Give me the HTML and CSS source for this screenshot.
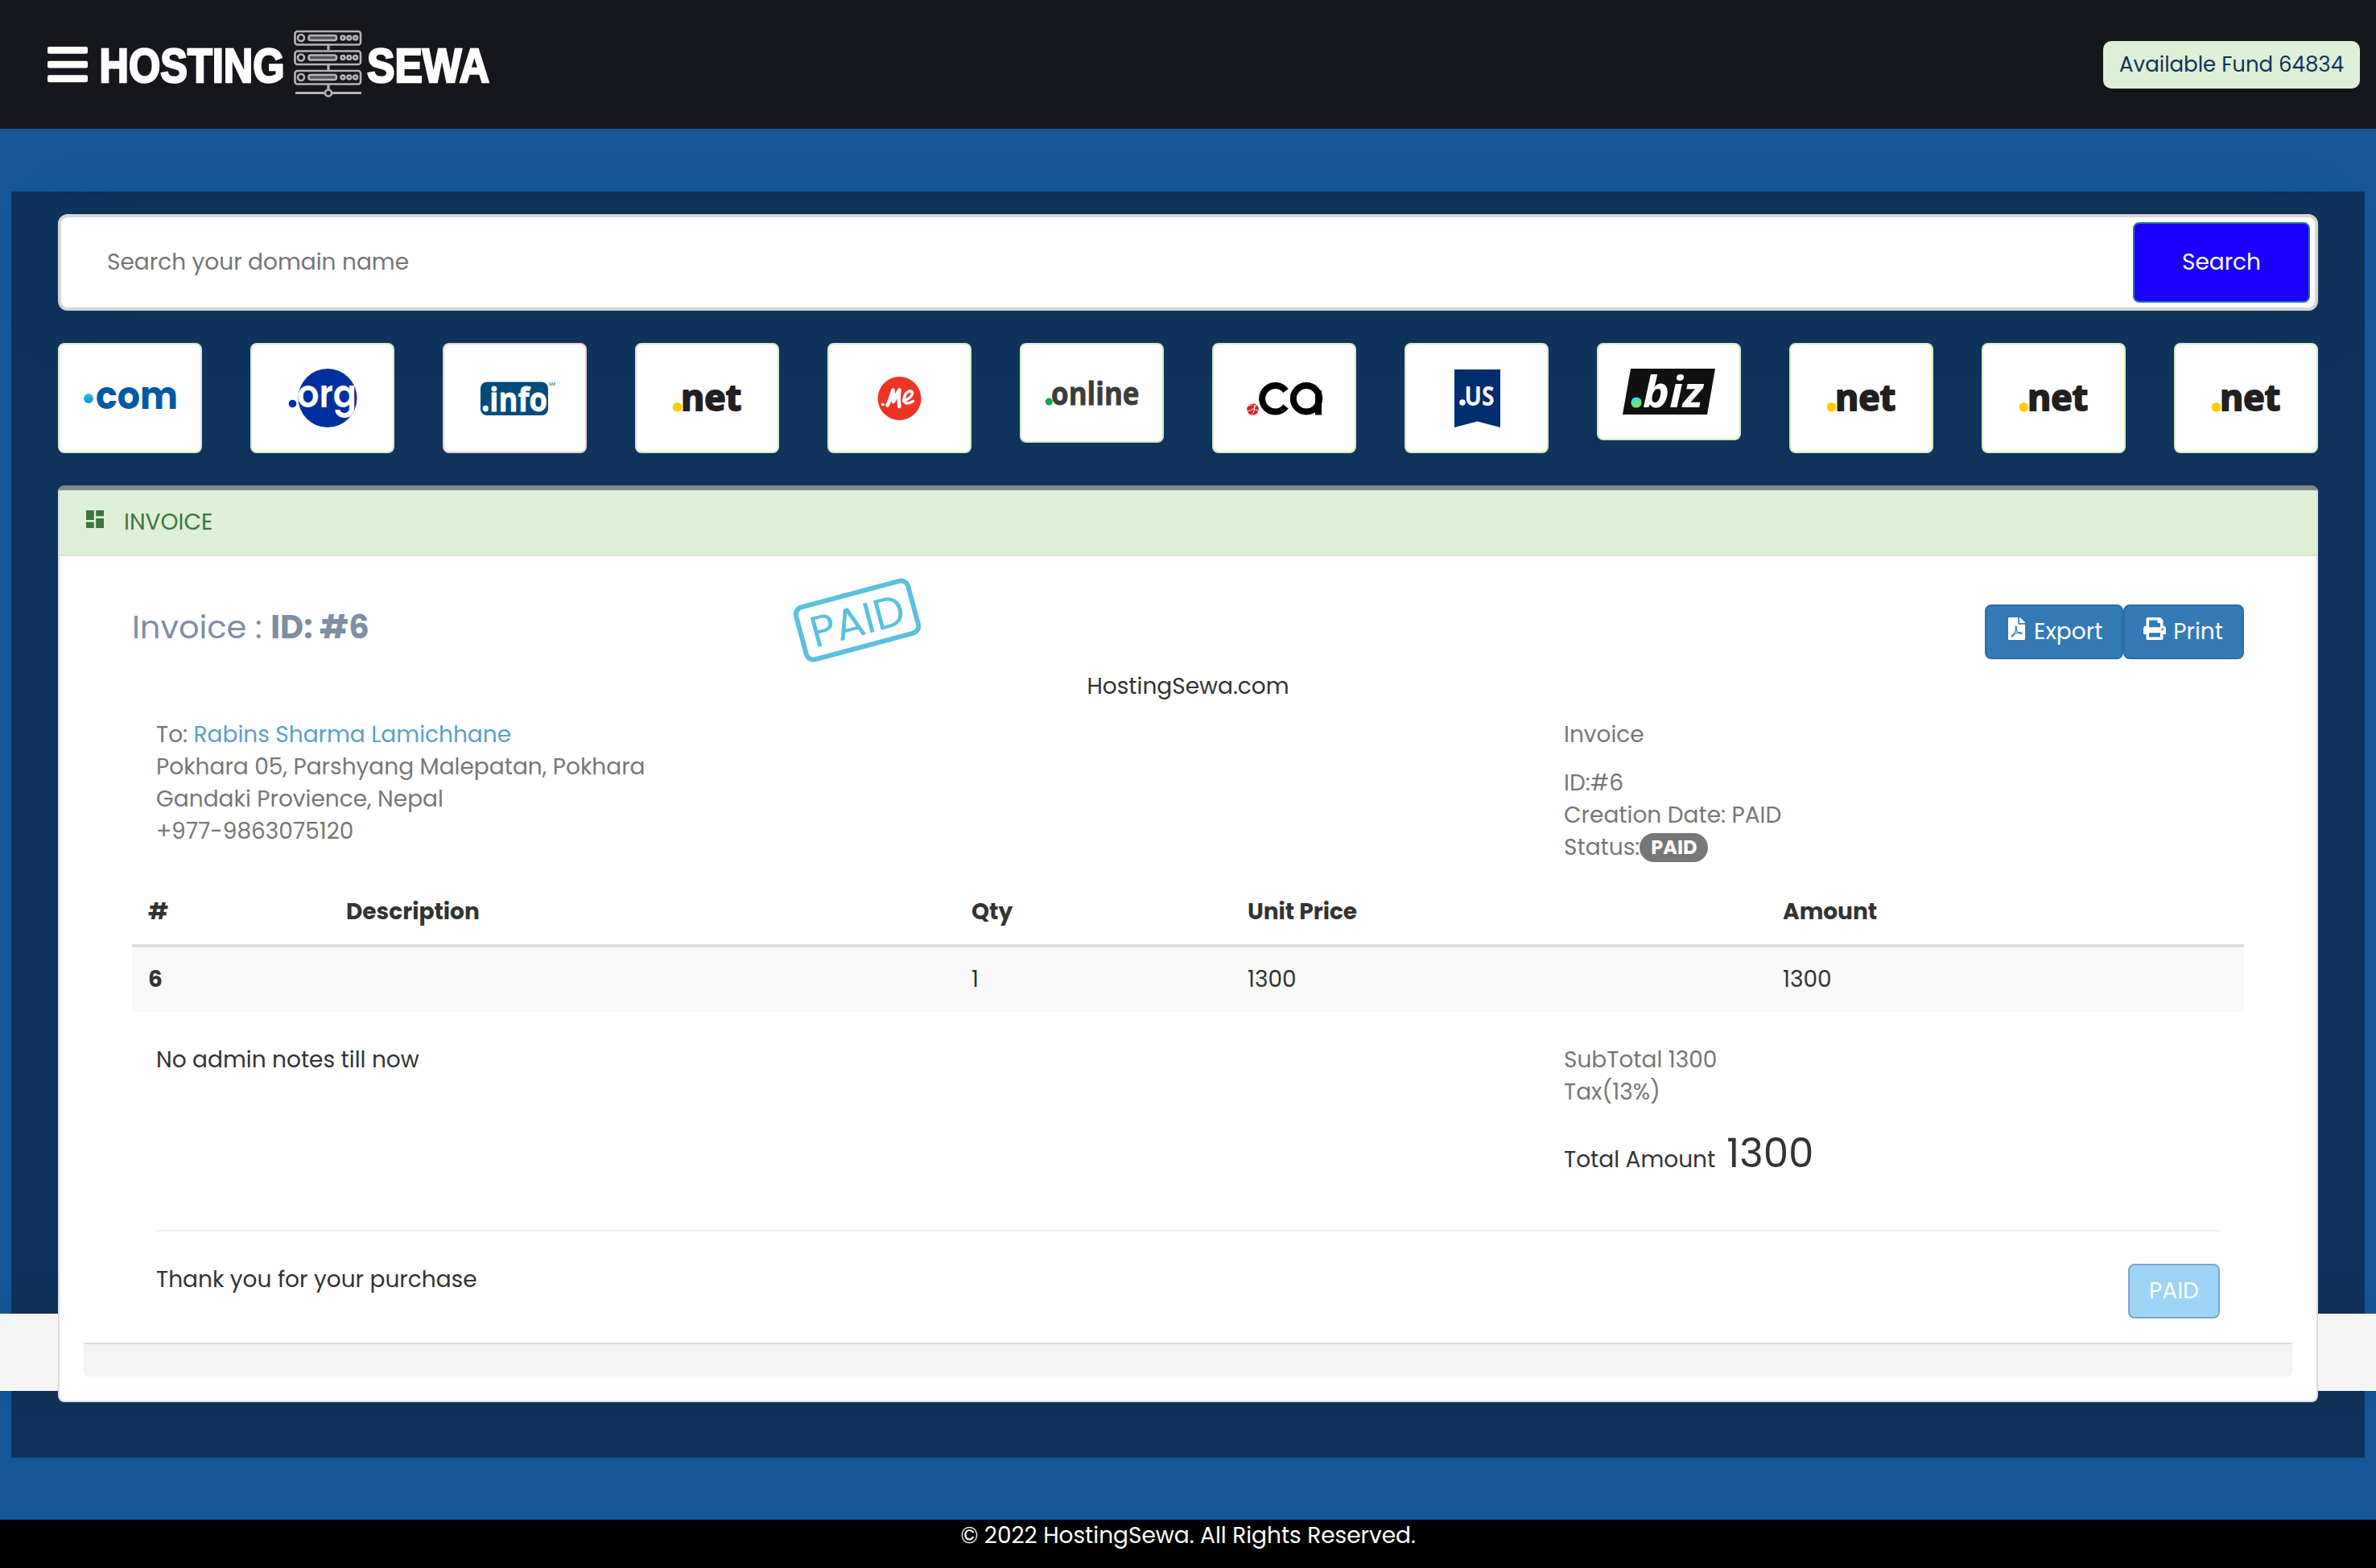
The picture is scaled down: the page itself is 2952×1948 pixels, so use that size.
FILE: index.html
```html
<!DOCTYPE html>
<html lang="en">
<head>
<meta charset="utf-8">
<title>HostingSewa - Invoice</title>
<link rel="stylesheet" href="styles.css">
</head>
<body>
<header class="topbar">
  <div class="brand">
    <svg class="menu" viewBox="0 0 49 43" fill="#fff"><rect width="49" height="8.6" rx="2"/><rect y="17.4" width="49" height="8.6" rx="2"/><rect y="34.6" width="49" height="8.6" rx="2"/></svg>
    <svg class="logo" viewBox="122 36 492 90">
      <g class="logo-word">
        <text x="124.500" y="102.500" textLength="230" lengthAdjust="spacingAndGlyphs">HOSTING</text>
        <text x="457" y="102.500" textLength="152" lengthAdjust="spacingAndGlyphs">SEWA</text>
      </g>
      <g fill="none" stroke="#b4b4b7" stroke-width="2.600">
        <g id="unit"><rect x="367.500" y="40" width="81.500" height="16.500" rx="3"/><circle cx="375" cy="48" r="4"/><rect x="384.500" y="45" width="34.500" height="6" rx="2.500" fill="#55565b"/><circle cx="427" cy="48" r="2.400"/><circle cx="434.800" cy="48" r="2.400"/><circle cx="442.600" cy="48" r="2.400"/></g>
        <use href="#unit" y="24.500"/><use href="#unit" y="49"/>
        <path d="M409 57v6M409 81v7M409 106v6M368 116.500h37M413 116.500h37" stroke-width="3.200"/>
        <circle cx="409" cy="116.500" r="4"/>
      </g>
    </svg>
  </div>
  <div class="fund">Available Fund 64834</div>
</header>

<main class="page">
  <div class="panel">
    <form class="search">
      <span class="search-input">Search your domain name</span>
      <button class="search-btn" type="button">Search</button>
    </form>

    <div class="tlds">
      <div class="tld"><svg viewBox="74 428 175 133">
        <defs><linearGradient id="dot" x2="0" y2="1"><stop stop-color="#2cc0f4"/><stop offset="1" stop-color="#0a93dc"/></linearGradient></defs>
        <circle cx="110" cy="495" r="5.900" fill="url(#dot)"/>
        <text x="119" y="508" class="pop" font-size="48" font-weight="700" fill="#0059a3" textLength="102" lengthAdjust="spacingAndGlyphs">com</text></svg></div>
      <div class="tld"><svg viewBox="313 428 175 133">
        <defs><clipPath id="globe"><circle cx="407" cy="494.500" r="36.500"/></clipPath></defs>
        <circle cx="407" cy="494.500" r="36.500" fill="#0030a0"/><circle cx="363.500" cy="501.500" r="4.800" fill="#0030a0"/>
        <g clip-path="url(#globe)"><text x="369" y="505.500" class="pop" font-size="47" font-weight="600" fill="#fff" textLength="74" lengthAdjust="spacingAndGlyphs">org</text></g></svg></div>
      <div class="tld tld-red"><svg viewBox="552 428 175 133">
        <rect x="597" y="474.500" width="84" height="41.500" rx="8" fill="#004b79"/>
        <text x="598" y="511" class="open" font-size="42" font-weight="700" fill="#fff" stroke="#fff" stroke-width=".8" textLength="82" lengthAdjust="spacingAndGlyphs">.info</text>
        <text x="682" y="479" class="open" font-size="5.500" fill="#004b79">SM</text></svg></div>
      <div class="tld"><svg viewBox="2 2 175 133">
        <g id="net"><circle cx="52.500" cy="79.800" r="5.900" fill="#ffcb05"/>
        <text x="57" y="84" class="open" font-size="44" font-weight="700" fill="#231f20" stroke="#231f20" stroke-width="2" stroke-linejoin="round" textLength="75" lengthAdjust="spacingAndGlyphs">net</text></g></svg></div>
      <div class="tld"><svg viewBox="1030 428 175 133">
        <circle cx="1117.500" cy="495" r="27" fill="#ee3524"/><circle cx="1096.800" cy="502.500" r="2.100" fill="#fff"/>
        <g fill="none" stroke="#fff" stroke-linecap="round" stroke-linejoin="round">
          <path d="M1102.500 503.500q2.500-4 7-19l.5 14.500q3.500-9 7.500-14.500q-1.500 9-.2 20.500" stroke-width="4.600"/>
          <path d="M1122.500 498q9-3 11-8.500q.5-4.500-4.200-3.500q-5.500 3-6.300 10q.5 8.500 11.500 2.500" stroke-width="3.600"/>
        </g></svg></div>
      <div class="tld tld-online"><svg viewBox="1269 428 175 120">
        <circle cx="1303.300" cy="499" r="4.600" fill="#11a84c"/>
        <text x="1306" y="503" class="open" font-size="39" font-weight="700" fill="#3c3c3b" stroke="#3c3c3b" stroke-width=".8" textLength="109.500" lengthAdjust="spacingAndGlyphs">online</text></svg></div>
      <div class="tld"><svg viewBox="1508 428 175 133">
        <circle cx="1556.500" cy="508.500" r="7.300" fill="#d3202e"/><path d="M1549 505q7-2 9-5M1561 502q-1 7-12 9M1558 508l6 3M1555 515q5-4 3-12" stroke="#fff" stroke-width="1" fill="none"/>
        <g fill="none" stroke="#000" stroke-width="8"><path d="M1597.500 485.500a16.300 16.300 0 1 0 0 19.500"/><circle cx="1623" cy="495.300" r="16.200"/><path d="M1638 485v30.500"/></g></svg></div>
      <div class="tld"><svg viewBox="1747 428 175 133">
        <path d="M1807 459h57v72l-28.500-7.500-28.500 7.500z" fill="#002d6d"/><circle cx="1817" cy="500" r="3.800" fill="#fff"/>
        <text x="1819.500" y="503.500" class="open" font-size="34" font-weight="700" fill="#fff" textLength="37" lengthAdjust="spacingAndGlyphs">US</text></svg></div>
      <div class="tld tld-biz"><svg viewBox="1986 428 175 117">
        <defs><linearGradient id="bizdot" x2=".3" y2="1"><stop offset=".2" stop-color="#1fe6e6"/><stop offset="1" stop-color="#8ee04e"/></linearGradient></defs>
        <path d="M2026 458h105l-10 57h-105z" fill="#111"/><circle cx="2033" cy="500" r="6.600" fill="url(#bizdot)"/>
        <text x="2041" y="506" class="open" font-size="53" font-weight="700" font-style="italic" fill="#fff" textLength="75" lengthAdjust="spacingAndGlyphs">biz</text></svg></div>
      <div class="tld"><svg viewBox="2 2 175 133"><use href="#net"/></svg></div>
      <div class="tld"><svg viewBox="2 2 175 133"><use href="#net"/></svg></div>
      <div class="tld"><svg viewBox="2 2 175 133"><use href="#net"/></svg></div>
    </div>

    <section class="invoice">
      <div class="invoice-heading">
        <svg viewBox="0 0 22 22" fill="#3c763d"><path d="M0 0h9.800v12H0zM0 14.600h9.800V22H0zM12.200 0H22v7.300h-9.800zM12.200 10H22v12h-9.800z"/></svg>
        <span>INVOICE</span>
      </div>
      <div class="invoice-body">
        <div class="title-row">
          <h3 class="title">Invoice : <b>ID: #6</b></h3>
          <span class="stamp">PAID</span>
          <div class="actions">
            <button class="btn" type="button"><svg width="21" height="28" viewBox="0 0 384 512" fill="#fff"><path d="M181.900 256.100c-5-16-4.900-46.900-2-46.900 8.400 0 7.600 36.900 2 46.900zm-1.700 47.200c-7.700 20.200-17.300 43.300-28.400 62.700 18.300-7 39-17.200 62.900-21.900-12.700-9.600-24.900-23.400-34.500-40.800zM86.100 428.100c0 .8 13.200-5.400 34.900-40.200-6.700 6.300-29.100 24.500-34.900 40.200zM248 160h136v328c0 13.300-10.700 24-24 24H24c-13.300 0-24-10.700-24-24V24C0 10.700 10.700 0 24 0h200v136c0 13.200 10.800 24 24 24zm-8 171.800c-20-12.200-33.300-29-42.700-53.800 4.500-18.500 11.600-46.600 6.200-64.200-4.700-29.400-42.400-26.500-47.800-6.800-5 18.300-.4 44.100 8.100 77-11.600 27.600-28.700 64.600-40.800 85.800-.1 0-.1.100-.2.100-27.100 13.900-73.600 44.500-54.500 68 5.600 6.900 16 10 21.500 10 17.900 0 35.700-18 61.100-61.800 25.800-8.500 54.100-19.100 79-23.200 21.700 11.800 47.100 19.500 64 19.500 29.200 0 31.200-32 19.700-43.400-13.900-13.600-54.300-9.700-73.600-7.200zM377 105L279 7c-4.500-4.500-10.600-7-17-7h-6v128h128v-6.100c0-6.300-2.500-12.400-7-16.900zm-74.100 255.300c4.100-2.700-2.500-11.900-42.800-9 37.100 15.800 42.800 9 42.800 9z"/></svg><span>Export</span></button>
            <button class="btn" type="button"><svg width="28" height="28" viewBox="0 0 512 512" fill="#fff"><path d="M448 192V77.250c0-8.490-3.370-16.620-9.370-22.630L393.370 9.370c-6-6-14.140-9.370-22.630-9.370H96C78.330 0 64 14.330 64 32v160c-35.350 0-64 28.650-64 64v112c0 8.840 7.160 16 16 16h48v96c0 17.670 14.330 32 32 32h320c17.670 0 32-14.330 32-32v-96h48c8.840 0 16-7.160 16-16V256c0-35.350-28.650-64-64-64zm-64 256H128v-96h256v96zm0-224H128V64h192v48c0 8.840 7.160 16 16 16h48v96zm48 72c-13.250 0-24-10.750-24-24 0-13.260 10.750-24 24-24s24 10.740 24 24c0 13.250-10.750 24-24 24z"/></svg><span>Print</span></button>
          </div>
        </div>
        <p class="company">HostingSewa.com</p>
        <div class="parties muted">
          <address>To: <a>Rabins Sharma Lamichhane</a><br>Pokhara 05, Parshyang Malepatan, Pokhara<br>Gandaki Provience, Nepal<br>+977-9863075120</address>
          <div>
            <p class="meta-head">Invoice</p>
            <p>ID:#6<br>Creation Date: PAID</p>
            <p class="status">Status:<span class="badge">PAID</span></p>
          </div>
        </div>
        <div class="table">
          <div class="tr th"><span>#</span><span>Description</span><span>Qty</span><span>Unit Price</span><span>Amount</span></div>
          <div class="tr td"><b>6</b><span></span><span>1</span><span>1300</span><span>1300</span></div>
        </div>
        <div class="summary">
          <p>No admin notes till now</p>
          <div>
            <p class="muted">SubTotal 1300<br>Tax(13%)</p>
            <p class="total"><span>Total Amount</span><strong>1300</strong></p>
          </div>
        </div>
        <div class="thanks">
          <p>Thank you for your purchase</p>
          <button class="btn-paid" type="button" disabled>PAID</button>
        </div>
        <div class="panel-footer"></div>
      </div>
    </section>
  </div>
</main>
<div class="strip"></div>
<footer class="footer">© 2022 HostingSewa. All Rights Reserved.</footer>
</body>
</html>
```
FILE: styles.css
```css
* { box-sizing: border-box; }
html, body { margin: 0; }
body {
  position: relative;
  height: 1948px;
  overflow: hidden;
  display: flex;
  flex-direction: column;
  background: #155799;
  color: #333;
  font: 400 28px/40px Poppins, "Open Sans", sans-serif;
}
p, h3 { margin: 0; font-weight: 400; }
button { font: inherit; margin: 0; }
svg { display: block; }

.topbar {
  height: 160px;
  padding: 0 20px 0 59px;
  display: flex;
  align-items: center;
  justify-content: space-between;
  background: #16171c;
}
.brand { display: flex; align-items: center; gap: 12px; }
.menu { width: 50px; height: 44px; overflow: visible; }
.logo { width: 492px; height: 90px; overflow: visible; }
.logo-word text {
  font: 700 59px "Liberation Sans", sans-serif;
  fill: #fff;
  stroke: #fff;
  stroke-width: 2.6px;
}
.fund {
  height: 59px;
  padding: 0 20px 0 20.500px;
  border-radius: 10px;
  background: #dff0d8;
  color: #10335b;
  font-size: 26px;
  line-height: 58px;
  white-space: nowrap;
}

.page { padding: 78px 14px 77px; }
.panel {
  height: 1573px;
  padding: 28px 58px 0;
  background: #10335b;
}

.search {
  height: 120px;
  margin: 0;
  padding: 0 6px 0 57px;
  display: flex;
  align-items: center;
  justify-content: space-between;
  background: #fff;
  border: 4px solid #d6d5d5;
  border-radius: 12px;
  box-shadow: 0 0 80px rgba(16, 60, 80, .2);
}
.search-input { color: #757575; }
.search-btn {
  width: 220px;
  height: 100px;
  border: 2px solid #2e6da4;
  border-radius: 8px;
  background: #1900ff;
  color: #fff;
}

.tlds {
  margin-top: 40px;
  height: 137px;
  display: flex;
  align-items: flex-start;
  gap: 60px;
}
.tld {
  flex: 0 0 179px;
  height: 137px;
  background: #fff;
  border: 2px solid #d6e9c6;
  border-radius: 8px;
}
.tld-red { border-color: #ebccd1; }
.tld-online { height: 124px; }
.tld-biz { height: 121px; }
.tld svg { width: 100%; height: 100%; }
.pop { font-family: Poppins, sans-serif; }
.open { font-family: "Open Sans", sans-serif; }

.invoice {
  position: relative;
  z-index: 2;
  height: 1139px;
  margin-top: 40px;
  background: #fff;
  border: 2px solid #ddd;
  border-top: 6px solid #7f8c8d;
  border-radius: 8px;
}
.invoice-heading {
  height: 82px;
  padding: 0 33px;
  display: flex;
  align-items: center;
  gap: 25px;
  background: #dff0d8;
  border-bottom: 2px solid #d6e9c6;
  border-radius: 4px 4px 0 0;
  color: #3c763d;
}
.invoice-heading svg { width: 22px; height: 22px; margin-top: -9px; }
.invoice-body { padding: 60px 30px 0; }

.title-row {
  position: relative;
  padding: 0 60px;
  height: 68px;
  display: flex;
  justify-content: space-between;
}
.title {
  padding-top: 6px;
  font-size: 40px;
  line-height: 44px;
  color: #7f8fa4;
}
.title b { font-weight: 700; }
.stamp {
  position: absolute;
  left: 886px;
  top: -17px;
  width: 150px;
  height: 73px;
  border: 6px solid #5bc0de;
  border-radius: 12px;
  color: #5bc0de;
  font-size: 54px;
  line-height: 63px;
  text-align: center;
  transform: rotate(-15deg);
}
.actions { display: flex; }
.btn {
  height: 68px;
  padding: 0 24px 0 23px;
  display: flex;
  align-items: center;
  gap: 9px;
  border: 2px solid #2e6da4;
  border-radius: 8px;
  background: #337ab7;
  color: #fff;
}
.btn svg { margin-top: -9px; }
.btn:first-child { padding-left: 27px; gap: 11px; }

.company { margin-top: 14px; text-align: center; }
.parties {
  margin-top: 20px;
  height: 200px;
  padding: 0 90px;
  display: grid;
  grid-template-columns: 1749px 1fr;
}
.muted { color: #777; }
address { font-style: normal; }
address a { color: #5b9fc6; }
.meta-head { margin-bottom: 20px; }
.status { display: flex; align-items: center; }
.badge {
  height: 36px;
  padding: 0 14px;
  border-radius: 20px;
  background: #777;
  color: #fff;
  font-size: 24px;
  font-weight: 700;
  line-height: 36px;
}

.table { margin: 0 60px; }
.tr {
  display: grid;
  grid-template-columns: 246px 777px 343px 665px 1fr;
}
.tr > * { padding: 20px; }
.th { font-weight: 700; border-bottom: 4px solid #ddd; height: 84px; }
.td { background: #f9f9f9; height: 80px; }

.summary {
  margin: 40px 90px 0;
  height: 233px;
  display: grid;
  grid-template-columns: 1749px 1fr;
  border-bottom: 2px solid #eee;
}
.total {
  margin-top: 20px;
  display: flex;
  align-items: baseline;
  gap: 14px;
  line-height: 72px;
}
.total strong { font-size: 50px; font-weight: 400; }

.thanks {
  margin: 40px 90px 0;
  height: 98px;
  display: flex;
  align-items: flex-start;
  justify-content: space-between;
}
.btn-paid {
  width: 114px;
  height: 68px;
  padding: 0;
  border: 2px solid #7ba4c9;
  border-radius: 8px;
  background: #9dd4f7;
  color: #fff;
}
.panel-footer {
  height: 42px;
  background: #f4f4f4;
  border-top: 2px solid #ddd;
  border-radius: 0 0 6px 6px;
}

/* full-width bar that runs behind the invoice card */
.strip {
  position: absolute;
  z-index: 1;
  left: 0;
  right: 0;
  top: 1632px;
  height: 96px;
  background: #f4f4f4;
  box-shadow: 0 -8px 40px rgba(0, 0, 0, .12);
}
.footer {
  height: 60px;
  background: #000;
  color: #fff;
  text-align: center;
}
```
